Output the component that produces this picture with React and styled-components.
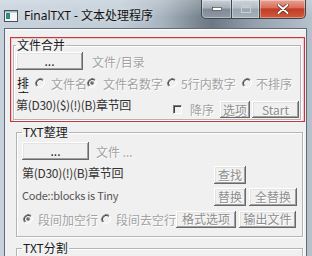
import React from 'react';
import styled, { createGlobalStyle } from 'styled-components';

const GlobalStyle = createGlobalStyle`
  html, body { margin: 0; padding: 0; }
  body {
    width: 312px;
    height: 256px;
    overflow: hidden;
    background: #b9c5cf;
    font-family: "Noto Sans", "Noto Sans CJK SC", sans-serif;
  }
`;

const Window = styled.div`
  width: 312px;
  height: 256px;
  display: flex;
  flex-direction: column;
  overflow: hidden;
  background: linear-gradient(90deg, #c7d2dc 0%, #c0ccd6 38%, #a7b4bf 52%, #77848f 64%, #6c7883 68%, #95a2ad 82%, #b5c1cb 100%);
`;

const TitleBar = styled.div`
  height: 28px;
  flex: none;
  display: flex;
  align-items: center;
  padding-left: 4px;
  background: linear-gradient(180deg, rgba(255,255,255,0.25), rgba(255,255,255,0) 60%);
`;

const AppIcon = styled.svg`
  width: 14px;
  height: 12px;
  flex: none;
  margin-top: 3px;
`;

const Title = styled.div`
  margin-left: 6px;
  margin-top: 1px;
  font-size: 12px;
  color: #111;
  white-space: nowrap;
  text-shadow: 0 0 6px rgba(255,255,255,0.7);
`;

const Caption = styled.div`
  margin-left: auto;
  margin-right: 6px;
  align-self: flex-start;
  display: flex;
  height: 19px;
`;

const CaptionButton = styled.div`
  width: ${p => p.$w}px;
  height: 18px;
  display: flex;
  align-items: center;
  justify-content: center;
  border: 1px solid #3c4650;
  border-top: none;
  border-left-width: ${p => (p.$first ? 1 : 0)}px;
  border-radius: ${p => p.$radius};
  background: ${p => p.$bg};
  box-shadow: inset 0 0 0 1px rgba(255,255,255,0.35);
`;

const Client = styled.div`
  flex: 1;
  margin: 0 5px 0 4px;
  border: 1px solid #5f6b76;
  border-bottom: none;
  background: #f0f0f0;
  box-shadow: inset 0 1px 0 #fff;
  padding: 8px 1px 0 5px;
  font-family: "Noto Sans CJK SC", "Noto Sans", sans-serif;
  font-size: 12px;
`;

const RedFrame = styled.div`
  border: 1px solid #c8353b;
  box-shadow: inset 0 0 0 1px rgba(225, 140, 140, 0.35);
  padding: 0 3px 1px 2px;
`;

const Group = styled.fieldset`
  margin: ${p => p.$margin || '0'};
  padding: ${p => p.$pad};
  border: 1px solid #b4b4b4;
  box-shadow: inset 1px 1px 0 #fff, 1px 1px 0 #fff;
  min-width: 0;
`;

const Legend = styled.legend`
  padding: 0 1px;
  font-size: 12px;
  line-height: 14px;
  color: #1a1a1a;
`;

const Row = styled.div`
  display: flex;
  align-items: ${p => p.$align || 'center'};
  height: ${p => p.$h}px;
  margin-top: ${p => p.$mt || 0}px;
`;

const Button = styled.div`
  width: ${p => p.$w}px;
  height: ${p => p.$h || 17}px;
  flex: none;
  display: flex;
  align-items: center;
  justify-content: center;
  background: #f0f0f0;
  box-shadow: inset -1px -1px 0 #696969, inset 1px 1px 0 #fff, inset -2px -2px 0 #a0a0a0, inset 2px 2px 0 #e3e3e3;
  color: ${p => (p.$disabled ? '#8e8e8e' : '#222')};
  text-shadow: ${p => (p.$disabled ? '1px 1px 0 #fff' : 'none')};
  font-size: 12px;
  line-height: 14px;
  margin-left: ${p => p.$ml || 0}px;
`;

const Dim = styled.span`
  color: #a2a2a2;
  text-shadow: 1px 1px 0 #fff;
  white-space: nowrap;
  margin-left: ${p => p.$ml || 0}px;
`;

const Text = styled.span`
  color: ${p => p.$color || '#333'};
  white-space: nowrap;
  line-height: 14px;
  font-size: ${p => p.$size || 12}px;
  letter-spacing: ${p => p.$ls || 0}px;
`;

const SortLabel = styled.div`
  width: 13px;
  height: 17px;
  margin: 6px 4px 0 1px;
  align-self: flex-start;
  overflow: hidden;
  line-height: 14px;
  color: #111;
  word-break: break-all;
`;

const RadioItem = styled.div`
  width: ${p => (p.$w ? `${p.$w}px` : 'auto')};
  flex: none;
  display: flex;
  align-items: center;
  gap: ${p => p.$gap ?? 5}px;
`;

const RadioSvg = styled.svg`
  width: 12px;
  height: 12px;
  flex: none;
`;

const CheckBox = styled.div`
  width: 7px;
  height: 7px;
  flex: none;
  border-top: 1px solid #7c7c7c;
  border-left: 1px solid #7c7c7c;
  border-right: 1px solid #fff;
  border-bottom: 1px solid #fff;
  box-shadow: inset 1px 1px 0 #404040;
  background: #f0f0f0;
`;

const Right = styled.div`
  margin-left: auto;
  margin-right: ${p => p.$mr || 0}px;
  margin-top: ${p => p.$mt || 0}px;
  display: flex;
  align-items: center;
`;

const ToolGrid = styled.div`
  display: grid;
  grid-template-columns: 1fr 32px 48px;
  grid-template-rows: 18px 18px;
  column-gap: 3px;
  row-gap: 4px;
  margin-top: 6px;
  margin-right: 5px;
`;

const Radio = ({ checked }) => (
  <RadioSvg viewBox="0 0 12 12">
    <path d="M2.5 9.5 A5 5 0 0 1 9.5 2.5" fill="none" stroke="#808080" strokeWidth="1" />
    <path d="M3.2 8.8 A4 4 0 0 1 8.8 3.2" fill="none" stroke="#3a3a3a" strokeWidth="1" />
    <path d="M9.5 2.5 A5 5 0 0 1 2.5 9.5" fill="none" stroke="#ffffff" strokeWidth="1" />
    {checked && <circle cx="6" cy="6" r="1.8" fill="#6a6a6a" />}
  </RadioSvg>
);

export default function App() {
  return (
    <>
      <GlobalStyle />
      <Window>
        <TitleBar>
          <AppIcon viewBox="0 0 14 12">
            <rect x="0.5" y="0.5" width="13" height="11" fill="#f4f6f6" stroke="#4a4f55" />
            <rect x="2" y="3" width="4" height="6" fill="#2f8c82" />
            <rect x="1" y="1" width="12" height="1.5" fill="#9fb2c2" />
          </AppIcon>
          <Title>FinalTXT - 文本处理程序</Title>
          <Caption>
            <CaptionButton $w={29} $first $radius="0 0 0 5px" $bg="linear-gradient(180deg, #c9d0d7 0%, #a6b0ba 45%, #7f8a95 50%, #8f9aa4 100%)">
              <svg width="10" height="4" viewBox="0 0 10 4"><rect x="0.5" y="0.5" width="9" height="3" fill="#fff" stroke="#333" strokeWidth="0.6" /></svg>
            </CaptionButton>
            <CaptionButton $w={27} $radius="0" $bg="linear-gradient(180deg, #ced5db 0%, #b2bcc5 45%, #9aa5af 50%, #a6b0b9 100%)">
              <svg width="10" height="8" viewBox="0 0 10 8"><rect x="0.5" y="0.5" width="9" height="7" fill="none" stroke="#c9d0d6" strokeWidth="1" /><rect x="1.5" y="1.5" width="7" height="1.5" fill="#c9d0d6" /></svg>
            </CaptionButton>
            <CaptionButton $w={45} $radius="0 0 5px 0" $bg="linear-gradient(180deg, #e8a395 0%, #d9705c 42%, #c23c25 50%, #cf5a3d 100%)">
              <svg width="12" height="10" viewBox="0 0 12 10">
                <path d="M1.5 1 L10.5 9 M10.5 1 L1.5 9" stroke="#4a1a10" strokeWidth="3.2" strokeLinecap="round" />
                <path d="M1.5 1 L10.5 9 M10.5 1 L1.5 9" stroke="#fff" strokeWidth="2" strokeLinecap="round" />
              </svg>
            </CaptionButton>
          </Caption>
        </TitleBar>

        <Client>
          <RedFrame>
            <Group $pad="0 1px 1px 2px">
              <Legend>文件合并</Legend>
              <Row $h={18}>
                <Button $w={67} $h={18}>...</Button>
                <Dim $ml={9}>文件/目录</Dim>
              </Row>
              <Row $h={26}>
                <SortLabel>排序</SortLabel>
                <RadioItem $w={52}><Radio /><Dim>文件名</Dim></RadioItem>
                <RadioItem $w={80}><Radio checked /><Dim>文件名数字</Dim></RadioItem>
                <RadioItem $w={75} $gap={3}><Radio /><Dim>5行内数字</Dim></RadioItem>
                <RadioItem $gap={3}><Radio /><Dim>不排序</Dim></RadioItem>
              </Row>
              <Row $h={20} $mt={2} $align="flex-start">
                <Text $ls={-0.3}>第(D30)($)(!)(B)章节回</Text>
                <Right $mt={3}>
                  <CheckBox />
                  <Dim $ml={8}>降序</Dim>
                  <Button $w={30} $h={17} $ml={6} $disabled>选项</Button>
                  <Button $w={47} $h={17} $ml={2} $disabled>Start</Button>
                </Right>
              </Row>
            </Group>
          </RedFrame>

          <Group $margin="3px 2px 0 6px" $pad="3px 0 8px 5px">
            <Legend>TXT整理</Legend>
            <Row $h={18}>
              <Button $w={67} $h={18}>...</Button>
              <Dim $ml={7}>文件 ...</Dim>
            </Row>
            <ToolGrid>
              <Text $ls={-0.3}>第(D30)(!)(B)章节回</Text>
              <Button $w={32} $h={18} $disabled>查找</Button>
              <span />
              <Text $color="#555" $size={11} $ls={-0.25}>Code::blocks is Tiny</Text>
              <Button $w={32} $h={18} $disabled>替换</Button>
              <Button $w={48} $h={18} $disabled>全替换</Button>
            </ToolGrid>
            <Row $h={18} $mt={4}>
              <RadioItem $w={78} $gap={4}><Radio checked /><Dim>段间加空行</Dim></RadioItem>
              <RadioItem $gap={4}><Radio /><Dim>段间去空行</Dim></RadioItem>
              <Right $mr={7}>
                <Button $w={60} $h={17} $disabled>格式选项</Button>
                <Button $w={57} $h={17} $ml={3} $disabled>输出文件</Button>
              </Right>
            </Row>
          </Group>

          <Group $margin="4px 2px 0 6px" $pad="0 0 20px 5px">
            <Legend>TXT分割</Legend>
          </Group>
        </Client>
      </Window>
    </>
  );
}
